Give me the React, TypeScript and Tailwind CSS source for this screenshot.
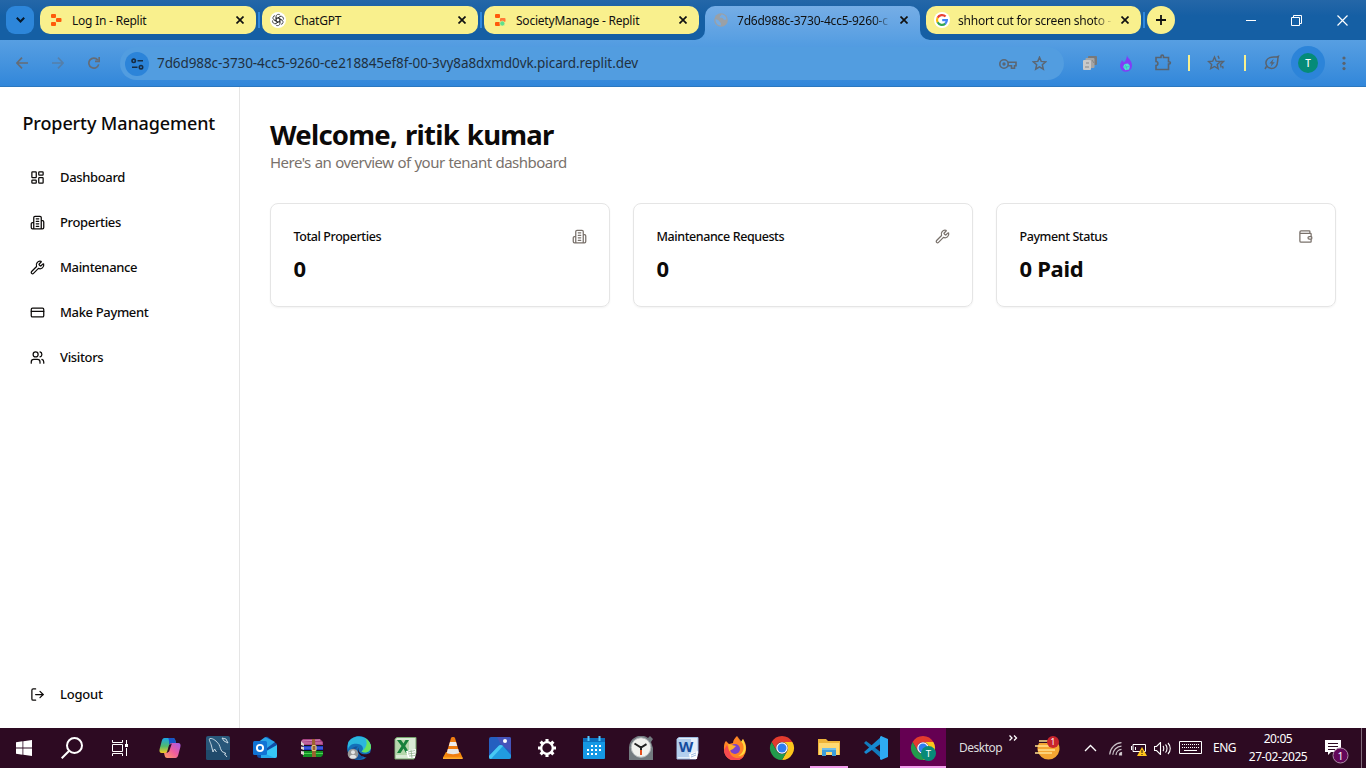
import React from "react";
import { LayoutDashboard, Wrench, CreditCard, Users, LogOut } from "lucide-react";

type P = { children?: React.ReactNode };

function ReplitIcon({ dot }: { dot?: boolean }) {
  return (
    <svg width="12" height="14" viewBox="0 0 12 14">
      <rect x="1" y="1" width="5" height="4" rx="1" fill="#ff5a0a" />
      <rect x="6" y="5" width="5.5" height="4" rx="1" fill={dot ? "#ff7a35" : "#ff5a0a"} />
      <rect x="1" y="9" width="5" height="4" rx="1" fill="#ff5a0a" />
      {dot && <circle cx="8.3" cy="10.5" r="2.5" fill="#5fe08c" stroke="#f9f08d" strokeWidth=".6" />}
    </svg>
  );
}

function OpenAIIcon() {
  return (
    <svg width="16" height="16" viewBox="0 0 16 16" fill="none">
      <circle cx="8" cy="8" r="8" fill="#fff" />
      <g stroke="#222" strokeWidth=".7">
        {[0, 60, 120, 180, 240, 300].map((a) => (
          <path key={a} d="M6.100 9.100V4.600a2.300 2.300 0 0 1 4.200-1.300M6.100 6.900 9.900 4.700" transform={`rotate(${a} 8 8)`} />
        ))}
      </g>
    </svg>
  );
}

function GlobeIcon() {
  return (
    <svg width="14" height="14" viewBox="0 0 14 14">
      <circle cx="7" cy="7" r="6.8" fill="#9aa0a6" />
      <path d="M1.500 6.200c2 .2 3.300.9 3.600 2 .3 1.100 1.700.8 1.800 2.100v2.200C3.800 12.300 1.400 9.900 1.500 6.200zM7.300 1.400c.2 1.500-1.500 1.300-1.600 2.500-.1 1 1.300.9 2.200.8 1.400 0 1 1.700 2.200 2 .9.2 1.600-.3 2.300-.2.1-2.900-2.200-5.100-5.100-5.100z" fill="#74ace5" />
    </svg>
  );
}

function GoogleG() {
  return (
    <svg width="16" height="16" viewBox="0 0 16 16" fill="none" strokeWidth="2.200">
      <circle cx="8" cy="8" r="8" fill="#fff" />
      <path d="M11.600 4.500A5 5 0 0 0 3.600 5.800" stroke="#ea4335" />
      <path d="M3.600 5.700a5 5 0 0 0 0 4.700" stroke="#fbbc05" />
      <path d="M3.600 10.300a5 5 0 0 0 7.700 1.400" stroke="#34a853" />
      <path d="M8.200 8.100h4.700a5 5 0 0 1-1.700 3.700" stroke="#4285f4" />
    </svg>
  );
}

function CloseX() {
  return (
    <svg width="8" height="8" viewBox="0 0 8 8" className="shrink-0" stroke="#111" strokeWidth="1.700">
      <path d="M.5.5l7 7M7.500.5l-7 7" />
    </svg>
  );
}

function Tab({ icon, children, active, wide, faded }: P & { icon: React.ReactNode; active?: boolean; wide?: boolean; faded?: boolean }) {
  const base = active
    ? "relative mr-1.5 flex h-[34px] shrink-0 items-start rounded-t-[10px] bg-linear-to-b from-[#75ade6] to-[#589fe2]"
    : "mr-1.5 flex h-7 shrink-0 items-start rounded-[10px] bg-[#f9f08d]";
  return (
    <div className={`${base} ${wide ? "w-[216px]" : "w-[215px]"}`}>
      {active && (
        <>
          <svg className="absolute bottom-0 -left-2.5" width="10" height="10">
            <path d="M10 0v10H0A10 10 0 0 0 10 0" fill="#589fe2" />
          </svg>
          <svg className="absolute -right-2.5 bottom-0" width="10" height="10">
            <path d="M0 0v10h10A10 10 0 0 1 0 0" fill="#589fe2" />
          </svg>
        </>
      )}
      <div className="ml-2 flex h-7 w-4 items-center justify-center">{icon}</div>
      <div className={`ml-2 flex h-7 flex-1 items-center pt-px text-[12px] tracking-[-0.22px] whitespace-nowrap text-[#111] ${faded ? "mask-r-from-88% mask-r-to-100%" : ""}`}>
        {children}
      </div>
      <div className="mr-3 ml-2 flex h-7 items-center">
        <CloseX />
      </div>
    </div>
  );
}

function TabDivider() {
  return <i className="mt-1.5 mr-0.5 -ml-1 h-4 w-0.5 bg-[#2e88de]" />;
}

function Browser() {
  return (
    <header className="h-[87px] font-['Noto_Sans',sans-serif]">
      <div className="flex h-10 items-start bg-linear-to-b from-[#2467a8] via-[#155fa4] via-40% to-[#155fa4] pt-1.5 pl-1.5">
        <div className="mr-1.5 flex size-7 items-center justify-center rounded-[9px] bg-[#2d86da]">
          <svg width="9" height="6" viewBox="0 0 9 6" fill="none" stroke="#07192b" strokeWidth="2"><path d="m.8.8 3.700 3.700L8.200.8" /></svg>
        </div>
        <Tab wide icon={<ReplitIcon />}>Log In - Replit</Tab>
        <TabDivider />
        <Tab wide icon={<OpenAIIcon />}>ChatGPT</Tab>
        <TabDivider />
        <Tab icon={<ReplitIcon dot />}>SocietyManage - Replit</Tab>
        <Tab active faded icon={<GlobeIcon />}>7d6d988c-3730-4cc5-9260-c</Tab>
        <Tab faded icon={<GoogleG />}>shhort cut for screen shoto -</Tab>
        <TabDivider />
        <div className="flex size-7 items-center justify-center rounded-full bg-[#f9f08d]">
          <svg width="10" height="10" stroke="#111" strokeWidth="1.800"><path d="M5 0v10M0 5h10" /></svg>
        </div>
        <div className="mr-px ml-auto flex h-7 items-center">
          <div className="flex w-[46px] justify-center pl-0.5"><svg width="10" height="10" stroke="#fff"><path d="M0 5.500h10" /></svg></div>
          <div className="flex w-[46px] justify-center"><svg width="11" height="11" fill="none" stroke="#fff"><path d="M2.500 2.500v-2h8v8h-2M.5 2.500h8v8h-8z" /></svg></div>
          <div className="flex w-[46px] justify-center"><svg width="11" height="11" stroke="#fff" strokeWidth="1.200"><path d="m.5.5 10 10M10.500.5l-10 10" /></svg></div>
        </div>
      </div>
      <div className="flex h-[47px] items-start border-b border-[#2c78bf] bg-linear-to-b from-[#579fe2] to-[#3187da] pt-[7px]">
        <div className="flex h-8 w-[120px] items-center pl-4 text-[#656c76]">
          <svg width="12" height="12" viewBox="0 0 12 12" fill="none" stroke="currentColor" strokeWidth="1.700"><path d="M12 6H1M6 .7.900 6 6 11.300" /></svg>
          <svg className="ml-6 opacity-50" width="12" height="12" viewBox="0 0 12 12" fill="none" stroke="currentColor" strokeWidth="1.700"><path d="M0 6h11M6 .7 11.100 6 6 11.300" /></svg>
          <svg className="ml-6" width="12" height="12" viewBox="0 0 12 12" fill="none" stroke="currentColor" strokeWidth="1.700"><path d="M10.700 7.400a5 5 0 1 1-.9-4.400M11.200 0v4.300H7" /></svg>
        </div>
        <div className="flex h-[33px] w-[944px] items-center rounded-[17px] bg-[#529de0] pr-[17px] pl-[5px]">
          <div className="flex size-6 items-center justify-center rounded-full bg-[#2c84d9]">
            <svg width="13" height="12" viewBox="0 0 13 12" fill="none" stroke="#172c43" strokeWidth="1.600"><circle cx="2.700" cy="2.800" r="1.700" /><path d="M6.500 2.800H12M1 9.200h5.500" /><circle cx="10" cy="9.200" r="1.700" /></svg>
          </div>
          <span className="ml-2 text-[13.500px] tracking-[-0.085px] text-[#20303f]">7d6d988c-3730-4cc5-9260-ce218845ef8f-00-3vy8a8dxmd0vk.picard.replit.dev</span>
          <div className="ml-auto flex items-center text-[#5b6673]">
            <svg width="18" height="12" viewBox="0 0 18 12" fill="none" stroke="currentColor" strokeWidth="1.600"><circle cx="5" cy="6" r="4.200" /><path d="M9 4.200h8v3.600h-1.500v2.400h-3V7.800H9" /><circle cx="5" cy="6" r="1.700" fill="currentColor" stroke="none" /></svg>
            <svg className="ml-[15px]" width="15" height="15" viewBox="0 0 15 15" fill="none" stroke="currentColor" strokeWidth="1.500"><path d="m7.500 1.300 1.700 4.100 4.500.4-3.400 2.900 1 4.400-3.800-2.300-3.800 2.300 1-4.400L1.300 5.800l4.500-.4z" /></svg>
          </div>
        </div>
        <div className="flex h-8 items-center pl-[18px] text-[#59636f]">
          <svg width="16" height="16" viewBox="0 0 16 16"><rect x="6" y="1" width="9" height="9" rx="1" fill="#77797b" /><rect x="3.500" y="3" width="9" height="10" rx="1" fill="#a5a5a5" /><rect x="1" y="5" width="8" height="10" rx="1" fill="#c9c9c9" /><path d="M3 12h4M4 8h3M10 5l2 3" stroke="#888" /></svg>
          <svg className="ml-5" width="16" height="17" viewBox="0 0 16 17"><path d="M9 0c0 3 5 5 5 10.500A6 6 0 0 1 2 11c0-3 1.500-4 2-6l2 2.500C7.500 6 9 3 9 0z" fill="#813df6" /><path d="m6.500 9 3.500-.4 2 2.400-1 3.500-3.500.7L5 12z" fill="#4ee1d5" /><path d="m6.500 9 2 3 3.500-1M5 12l3.500 0 .5 3" stroke="#35a7ba" strokeWidth=".5" fill="none" /></svg>
          <svg className="ml-5" width="18" height="18" viewBox="0 0 18 18" fill="none" stroke="currentColor" strokeWidth="1.600"><path d="M2 3.500h5V2.300c0-1.700 2.500-1.700 2.500 0v1.200h5v4.200h.7c1.600 0 1.600 2.300 0 2.300h-.7v5.500H2v-4c2.500 0 2.500-4 0-4z" /></svg>
          <i className="ml-4 h-4 w-0.5 bg-[#f9f08d]" />
          <svg className="ml-[17px]" width="18" height="16" viewBox="0 0 18 16" fill="none" stroke="currentColor" strokeWidth="1.400"><path d="m7.500 2 1.700 4.200 4.300.3L10.200 9.400l1 4.300-3.700-2.200-3.800 2.200 1-4.300L1.500 6.500l4.200-.3zM11 .8l1.200 3M14 6.500h2.500L13.500 9.500l.7 3M15.500 11l.7 2.500" /></svg>
          <i className="ml-[19px] h-4 w-0.5 bg-[#f9f08d]" />
          <svg className="ml-[18px]" width="16" height="16" viewBox="0 0 16 16" fill="none" stroke="currentColor" strokeWidth="1.500"><path d="M14.300 1.500c-2.600 1.200-6 .1-8.500 1.100C2.700 3.800 1 7 2.500 10.300c1.500 3.500 6.300 4.200 9.300 1.400 2.700-2.600 1.200-6.200 2.500-10.200zM2.500 11.500 1 14" /><path d="M9.600 3.800 5.400 8.400h2.300l-1.100 3.400 4.200-4.600H8.400z" fill="currentColor" stroke="none" /></svg>
        </div>
        <div className="ml-[11px] -mt-px flex size-[34px] items-center justify-center rounded-full bg-[#2c84d9]"><span className="flex size-5 items-center justify-center rounded-full bg-[#058b78] text-[10px] font-medium text-white">T</span></div>
        <svg className="mt-[9px] ml-[17px]" width="4" height="15" viewBox="0 0 4 15" fill="#59636f"><circle cx="2" cy="2" r="1.600" /><circle cx="2" cy="7.300" r="1.600" /><circle cx="2" cy="12.600" r="1.600" /></svg>
      </div>
    </header>
  );
}

function BuildingTall({ className }: { className?: string }) {
  return (
    <svg className={className} viewBox="0 0 24 24" fill="none" stroke="currentColor" strokeWidth="2" strokeLinecap="round" strokeLinejoin="round">
      <path d="M6 22V4a2 2 0 0 1 2-2h8a2 2 0 0 1 2 2v18ZM6 12H4a2 2 0 0 0-2 2v6a2 2 0 0 0 2 2h2M18 9h2a2 2 0 0 1 2 2v9a2 2 0 0 1-2 2h-2M10 6h4M10 10h4M10 14h4M10 18h4" />
    </svg>
  );
}

const nav = [
  { label: "Dashboard", Icon: LayoutDashboard },
  { label: "Properties", Icon: BuildingTall },
  { label: "Maintenance", Icon: Wrench },
  { label: "Make Payment", Icon: CreditCard },
  { label: "Visitors", Icon: Users },
];

function Card({ title, value, children }: P & { title: string; value: string }) {
  return (
    <section className="h-[104px] rounded-[8px] border border-[#e5e5e5] px-[22px] pt-[22px] shadow-xs">
      <div className="flex h-5 items-center justify-between">
        <h2 className="pt-0.5 pl-[0.5px] text-[12.500px] font-medium tracking-[-0.420px]">{title}</h2>
        <span className="text-[#79716b]">{children}</span>
      </div>
      <div className="mt-[7px] pl-[0.5px] text-[22px] leading-[30px] font-bold tracking-[-0.300px] word-spacing-[1px]">{value}</div>
    </section>
  );
}

function Page() {
  return (
    <div className="flex h-[641px] bg-white font-['Noto_Sans',sans-serif] text-[#0c0a09]">
      <aside className="flex w-60 flex-col border-r border-[#e5e5e5]">
        <h1 className="mt-[23px] ml-[22.500px] text-[18px] leading-[27px] font-medium tracking-[-0.120px] whitespace-nowrap">Property Management</h1>
        <nav className="mt-[18px]">
          {nav.map(({ label, Icon }) => (
            <a key={label} className="flex h-[45px] items-center pl-[30px] text-[13px] font-medium tracking-[-0.350px]">
              <Icon className="mr-[15px] size-[15px]" />
              {label}
            </a>
          ))}
        </nav>
        <a className="mt-auto mb-[11px] flex h-[45px] items-center pl-[30px] text-[13px] font-medium tracking-[-0.200px]">
          <LogOut className="mr-[15px] size-[15px]" />
          Logout
        </a>
      </aside>
      <main className="flex-1 px-[30px] pt-[30px]">
        <h1 className="text-[27.500px] leading-[35px] font-bold tracking-[-0.750px] [word-spacing:1.500px]">Welcome, ritik kumar</h1>
        <p className="-mt-px text-[15px] leading-[22px] tracking-[-0.520px] text-[#79716b] [word-spacing:0.500px]">Here's an overview of your tenant dashboard</p>
        <div className="mt-[30px] grid grid-cols-3 gap-[23px]">
          <Card title="Total Properties" value="0"><BuildingTall className="size-[15px]" /></Card>
          <Card title="Maintenance Requests" value="0"><Wrench className="size-[15px]" /></Card>
          <Card title="Payment Status" value="0 Paid">
            <svg className="size-[15px]" viewBox="0 0 24 24" fill="none" stroke="currentColor" strokeWidth="2" strokeLinecap="round" strokeLinejoin="round"><path d="M19 7V4a1 1 0 0 0-1-1H5a2 2 0 0 0 0 4h15a1 1 0 0 1 1 1v4h-3a2 2 0 0 0 0 4h3a1 1 0 0 0 1-1v-2a1 1 0 0 0-1-1M3 5v14a2 2 0 0 0 2 2h15a1 1 0 0 0 1-1v-4" /></svg>
          </Card>
        </div>
      </main>
    </div>
  );
}

function Slot({ children, open, current }: P & { open?: boolean; current?: boolean }) {
  return (
    <div className={current ? "ml-px flex h-10 w-[46px] flex-col items-center bg-[#650052]" : "flex h-10 w-[47px] flex-col items-center"}>
      <div className="flex h-[38px] items-center justify-center pt-0.5">{children}</div>
      {(open || current) && <div className={current ? "h-0.5 w-full bg-[#f29cec]" : "h-0.5 w-[38px] bg-[#f29cec]"} />}
    </div>
  );
}

function Chrome({ badge }: { badge?: boolean }) {
  return (
    <svg width="26" height="26" viewBox="0 0 26 26">
      <path d="M2.600 7A12 12 0 0 1 23.400 7H13a6 6 0 0 0-5.200 9z" fill="#e33b2e" />
      <path d="M23.400 7A12 12 0 0 1 13 25l5.200-9A6 6 0 0 0 13 7z" fill="#fcc61c" />
      <path d="M2.600 7A12 12 0 0 0 13 25l5.200-9A6 6 0 0 1 7.800 16z" fill="#229b4c" />
      <circle cx="13" cy="13" r="5.800" fill="#fff" />
      <circle cx="13" cy="13" r="4.500" fill="#2f7df0" />
      {badge && <><circle cx="18.500" cy="18.500" r="7.500" fill="#078a78" /><text x="18.500" y="22" fontSize="9.500" fill="#fff" textAnchor="middle" fontFamily="Noto Sans">T</text></>}
    </svg>
  );
}

function Taskbar() {
  return (
    <footer className="flex h-10 bg-[#2d0a22] font-['Noto_Sans',sans-serif] text-white">
      <div className="flex w-12 items-center justify-center"><svg width="16" height="16" viewBox="0 0 16 16" fill="#fff"><path d="M0 2.200 6.500 1.300v6.300H0zM7.300 1.200 16 0v7.600H7.300zM0 8.400h6.500v6.300L0 13.800zM7.300 8.400H16V16l-8.700-1.200z" /></svg></div>
      <div className="flex w-12 items-center justify-center"><svg width="22" height="22" viewBox="0 0 22 22" fill="none" stroke="#fff" strokeWidth="2"><circle cx="13.500" cy="8.500" r="7.500" /><path d="M8 14 .7 21.300" /></svg></div>
      <div className="mr-[3px] flex w-12 items-center justify-center"><svg width="17" height="16" viewBox="0 0 17 16" fill="none" stroke="#fff"><path d="M.5 0v2.500h10V0M.5 16v-2.500h10V16M.5 4.500h10v7H.5zM14.500 0v4M14.500 8v8" /><path d="M13 4h3v3h-3z" fill="#fff" stroke="none" /></svg></div>

      <Slot>
        <svg className="-ml-px" width="22" height="22" viewBox="0 0 24 22" preserveAspectRatio="none">
          <defs>
            <linearGradient id="cpa" x1="0" y1="0" x2="0" y2="1"><stop stopColor="#1aa7e8" /><stop offset=".55" stopColor="#52b96c" /><stop offset="1" stopColor="#f5cb25" /></linearGradient>
            <linearGradient id="cpb" x1="1" y1="0" x2="0" y2="1"><stop stopColor="#a45bea" /><stop offset=".5" stopColor="#ef5c9c" /><stop offset="1" stopColor="#ffa260" /></linearGradient>
          </defs>
          <path d="M6 1h9c2 0 2.500 1 3 3l.5 2h-4c-2 0-3 1-3.500 3l-1.500 5c-.5 1.500-1.500 2-3 2H3c-2 0-3-1.500-2.300-4L3 4c.6-2 1.500-3 3-3z" fill="url(#cpa)" />
          <path d="M10 1h5c2 0 2.500 1 3 3l.5 2h-4c-2 0-3 1-3.500 2C11 5 11 2 10 1z" fill="#1754c8" />
          <path d="M18 21H9c-2 0-2.500-1-3-3l-.5-2h1c2 0 3-1 3.500-3l1.500-5c.5-1.500 1.500-2 3-2H21c2 0 3 1.500 2.300 4L21 18c-.6 2-1.500 3-3 3z" fill="url(#cpb)" />
          <path d="m11 8 3-1.500-3 8L8.500 16z" fill="#2d0a22" />
        </svg>
      </Slot>
      <Slot>
        <svg width="24" height="24" viewBox="0 0 24 24" fill="none"><rect width="24" height="24" rx="2" fill="#28577a" /><path d="M0 14h24v8a2 2 0 0 1-2 2H2a2 2 0 0 1-2-2z" fill="#204a6b" /><path d="M7 16 5.500 10C5 7 2 3 4 2.500c3-.5 7 3 9 6 1.500 3 1.500 5 3 7l4 2-1.500.5 2.500 3M7 16l1.500-3 2 3M16 2l2 3 4 2-2-4z" stroke="#d9e5ed" strokeWidth=".9" /></svg>
      </Slot>
      <Slot>
        <svg width="24" height="24" viewBox="0 0 24 24"><path d="m4 8 9-7c.6-.4 1.200-.4 1.800 0L24 8v12a2 2 0 0 1-2 2H7a3 3 0 0 1-3-3z" fill="#0f4ea6" /><path d="m4 7 7.500-5.500c.6-.4 1.200-.4 1.800 0L22 6l-8 6H4z" fill="#29a4e8" /><path d="m24 9-16 9v2a2 2 0 0 0 2 2h12a2 2 0 0 0 2-2z" fill="#36c6f5" /><path d="m8 16 14 6H8z" fill="#26a9ea" /><rect y="5" width="14" height="14" rx="1.500" fill="#1173d4" /><circle cx="7" cy="12" r="3.100" stroke="#fff" strokeWidth="1.900" fill="none" /></svg>
      </Slot>
      <Slot>
        <svg width="24" height="20" viewBox="0 0 24 20"><path d="m1 3 2-2h17l3 3v3H3z" fill="#a84383" /><path d="m2 3 18-1M3 5h19" stroke="#e7a6cf" strokeWidth=".7" /><path d="M3 8h20v4H3z" fill="#1d39c8" /><path d="M3 13h20v4l-2 2H3z" fill="#129023" /><path d="M3 15.500h20" stroke="#5ae45d" strokeWidth=".8" /><path d="M3 10h20" stroke="#6f8cf2" strokeWidth=".8" /><path d="M2 7.500h21M2 12.500h21" stroke="#11131e" strokeWidth="1.200" /><path d="m1 3 3 3v2L1 7zM1 8.500 4 9v3l-3-1zM1 13l3 .5V17l-3-1z" fill="#ddd6d0" /><path d="M12 1h3l1 18h-4z" fill="#9b6330" /><rect x="12" y="7.500" width="4" height="5" rx="1" fill="none" stroke="#e5c978" strokeWidth="1.200" /></svg>
      </Slot>
      <Slot>
        <svg width="24" height="24" viewBox="0 0 24 24"><circle cx="12" cy="12" r="12" fill="#1470b8" /><path d="M1 7C5-2 21-2 24 10c.5 6-6 8-9.500 5.500 3-3 1-7-3.500-7.500C7 7.500 3 8 1 13z" fill="#2bb7dd" /><path d="M18 2c5 3 7 8 5.500 11-2 4-6 4-9 2.500C20 12 21 6 18 2z" fill="#69e35c" /><path d="M12 10.500c-2 2.500 0 7.500 5 7.800 2.500.2 4-.5 6-1.300l1 2-3 3-4-1C12 20 9 14 12 10.500z" fill="#2d0a22" /><path d="M11 10.500c-4 3-2 9 6 10-3 4-9 4-13 .5-2-8 2-11 7-10.500z" fill="#15529a" /><circle cx="6" cy="18" r="5.300" fill="#999" /><circle cx="6" cy="16.300" r="2" fill="#e5e5e5" /><path d="M2.500 21c1-3 6-3 7 0-2 2-5 2-7 0z" fill="#e5e5e5" /></svg>
      </Slot>
      <Slot>
        <svg width="23" height="23" viewBox="0 0 23 23"><path d="M1 2 3 .5h19v15.500L20 22H1z" fill="#d9ead5" stroke="#76a66d" /><path d="M2 3h13v15H2z" fill="#b5d7ab" /><path d="m3 3 4.500 6L3 16h3.500l3-4.500 2.500 4.500h3.500l-4.300-7L15 3h-3.500l-2 3.500L7 3z" fill="#16813b" /><path d="m12 14 10-2-1 9H14z" fill="#fff" /><path d="m14 15 7-1.500M14 17l7-1M15 19l6-.500M17 13l1 8" stroke="#8db08a" strokeWidth=".8" /></svg>
      </Slot>
      <Slot>
        <svg width="22" height="24" viewBox="0 0 22 24"><path d="M4 16h14l2.500 5.500V23H1v-1.500z" fill="#f58a0b" /><path d="M9 2c.5-1.200 3.500-1.200 4 0l5 17c-2 2-12 2-14 0z" fill="#ef7d12" /><path d="m8 6 6 0 1.200 4H6.800z" fill="#eee" /><path d="m5.800 13 10.400 0 1 4c-2 1.500-10.400 1.500-12.400 0z" fill="#e7e7e7" /><path d="M1 21.500h19.500V23H1z" fill="#ffad32" /></svg>
      </Slot>
      <Slot>
        <svg width="22" height="22" viewBox="0 0 22 22"><rect width="22" height="22" rx="2" fill="#245fc0" /><path d="M8 0h12a2 2 0 0 1 2 2v12L12 8z" fill="#4554ba" /><path d="m0 19 9.500-10c1.400-1.400 3-1.400 4.500 0l8 9v2a2 2 0 0 1-2 2H2a2 2 0 0 1-2-2z" fill="#219cdf" /><path d="m0 19 9.500-10c1.400-1.400 3-1.400 4.500 0L2 22a2 2 0 0 1-2-2z" fill="#48c8f3" /><circle cx="16" cy="4" r="2" fill="#fff" /></svg>
      </Slot>
      <Slot>
        <svg width="20" height="20" viewBox="0 0 20 20" fill="none" stroke="#fff"><circle cx="10" cy="10" r="5.800" strokeWidth="2.300" /><path d="M10 1v3M10 16v3M1 10h3M16 10h3M3.600 3.600l2.200 2.200M14.200 14.200l2.200 2.200M3.600 16.400l2.200-2.200M14.200 5.800l2.200-2.200" strokeWidth="3.100" /></svg>
      </Slot>
      <Slot>
        <svg width="22" height="24" viewBox="0 0 22 24"><rect y="2" width="22" height="21" rx="1" fill="#1598e5" /><path d="M0 3a1 1 0 0 1 1-1h20a1 1 0 0 1 1 1v3H0z" fill="#0c71be" /><path d="M5.500 0v5M16.500 0v5" stroke="#57caff" strokeWidth="2" /><path d="M8 10h11M4 14h15M4 18h11" stroke="#fff" strokeWidth="2" strokeDasharray="2 2" /></svg>
      </Slot>
      <Slot>
        <svg width="24" height="24" viewBox="0 0 24 24"><path d="M0 12A12 12 0 0 1 19 2l2-2 3 3-2 3 2 6v12H0z" fill="#737b80" /><circle cx="12" cy="11.500" r="9.800" fill="#f1f1ee" stroke="#b3b8ba" /><path d="m5.500 7.500 6.500 4 5.500-3.300" fill="none" stroke="#222" strokeWidth="2" /><path d="M12 10v4" stroke="#222" strokeWidth="2" /><path d="M12 14v5" stroke="#e64d1c" strokeWidth="2" /></svg>
      </Slot>
      <Slot>
        <svg width="23" height="23" viewBox="0 0 23 23"><path d="M1 2 3 .5h19V16l-2 6H1z" fill="#e4eef9" stroke="#9dbbe1" /><path d="M1 2h14v18H1z" fill="#b3cfee" /><text x="10" y="15" textAnchor="middle" fontSize="15" fontWeight="bold" fill="#164c9e" fontFamily="Noto Sans">W</text><path d="m13 17 9-3-1 8h-7z" fill="#fff" /><path d="m15 18 5-2M15 20l5-2" stroke="#9ebde2" /></svg>
      </Slot>
      <Slot>
        <svg width="24" height="24" viewBox="0 0 24 24"><path d="M3 5 6 8l4-1c0-3 2-5 4-7l4 6 2-3c2 3 3.500 6 3 10a11 11 0 0 1-22 1C.8 10 1 7 3 5z" fill="#ff8425" /><path d="m14 0 6 8c2 6-1 10-5 12 7 0 9-6 7-12l-2-5-2 3z" fill="#ffd93e" /><path d="M1 14a11 11 0 0 0 20 6c-4 3-12 3-14-3L4 9z" fill="#f5494f" /><circle cx="12" cy="13" r="5" fill="#7a42cb" /><path d="m5 8 4 1 4 1-3 3-4 2z" fill="#ffb12e" /></svg>
      </Slot>
      <Slot><Chrome /></Slot>
      <Slot open>
        <svg width="22" height="20" viewBox="0 0 22 20"><path d="M0 1h8l2 2h12v14H0z" fill="#eeb339" /><path d="M1 5h20v12H1z" fill="#ffd973" /><path d="M4 18v-8h14v8h-4v-4H8v4z" fill="#3e9edb" /><path d="M4 10h14v2H4z" fill="#71bde9" /></svg>
      </Slot>
      <Slot>
        <svg width="24" height="24" viewBox="0 0 24 24"><path d="m0 7 2-2L18 17v6z" fill="#127bbd" /><path d="m0 16 2 2L18 7V0z" fill="#1689d1" /><path d="m17 0 7 3v18l-7 3-1-1V1z" fill="#2eaaf2" /></svg>
      </Slot>
      <Slot current><Chrome badge /></Slot>

      <div className="flex w-[420px]">
        <span className="ml-[13px] w-[50px] pt-[11px] text-[12px] leading-[18px] tracking-[-0.500px] whitespace-nowrap text-[#ddd]">Desktop</span>
        <svg className="mt-[7px]" width="9" height="6" viewBox="0 0 9 6" fill="none" stroke="#fff" strokeWidth="1.300"><path d="m.5.5 2.500 2.500L.5 5.500M5 .5 7.500 3 5 5.500" /></svg>
        <svg className="mt-[7px] ml-[17px]" width="26" height="26" viewBox="0 0 26 26"><path d="M4 8a11 11 0 1 0 19 0z" fill="#f4a532" /><path d="M4 6h14M0 11h20M3 15h17M0 18h17" stroke="#ffe18f" strokeWidth="1.700" /><circle cx="18" cy="7" r="6" fill="#c9242c" /><text x="18" y="10" textAnchor="middle" fontSize="8.500" fill="#fff" fontFamily="Noto Sans">1</text></svg>
        <svg className="mt-[16px] ml-[23px]" width="13" height="8" fill="none" stroke="#fff" strokeWidth="1.300"><path d="m1 7 5.500-5.500L12 7" /></svg>
        <svg className="mt-[14px] ml-3" width="14" height="14" viewBox="0 0 14 14" fill="none" stroke="#c9c1c7" strokeWidth="1.200"><path d="M.7 12.500A12.500 12.500 0 0 1 12.500.7M3.800 12.800a9 9 0 0 1 8.700-8.700M7 13a6 6 0 0 1 5.500-5.700" /><path d="M10.500 13a2.300 2.300 0 0 1 2-2.500V13z" fill="#fff" /></svg>
        <svg className="mt-[14px] ml-2" width="16" height="16" viewBox="0 0 16 16" fill="none" stroke="#fff"><path d="M2 2.500h12.500v7H2zM.5 4v4M4.500 5v3" /><path d="m11 5 5 9H6z" fill="#ffc51c" stroke="none" /><path d="M11 8v3M11 12v1" stroke="#241611" /></svg>
        <svg className="mt-[14px] ml-[7px]" width="17" height="13" viewBox="0 0 17 13" fill="none" stroke="#fff" strokeWidth="1.100"><path d="M.5 4.500h2l4-4v12l-4-4h-2zM9 4c1 1 1 4 0 5M11.500 2.500c2 2 2 6 0 8M14 1c3 3 3 8 0 11" /></svg>
        <svg className="mt-[13px] ml-[8px]" width="23" height="13" viewBox="0 0 23 13" fill="none" stroke="#fff"><path d="M.5.5h22v12H.5zM5 9.500h13" /><path d="M3 3.500h17M3 6.500h17" strokeDasharray="1 1" /></svg>
        <span className="ml-[11px] w-[23px] pt-[11px] text-[12px] leading-[18px] tracking-[-0.500px]">ENG</span>
        <div className="ml-2.5 w-[64px] pt-0.5 text-center text-[12px] leading-[18px] tracking-[-0.400px] whitespace-nowrap"><div>20:05</div><div>27-02-2025</div></div>
        <svg className="mt-[11px] ml-[15px]" width="26" height="26" viewBox="0 0 26 26"><path d="M0 1h16v12H6l-3 3v-3H0z" fill="#fff" /><path d="M3 4.500h10M3 7.500h10M3 10.500h7" stroke="#2d0a22" /><circle cx="15.500" cy="16.500" r="7.500" fill="#630759" stroke="#aa8aa5" /><text x="15.500" y="20.500" textAnchor="middle" fontSize="10.500" fill="#fff" fontFamily="Noto Sans">1</text></svg>
        <i className="ml-auto mr-[4px] h-10 w-px bg-[#806b7a]" />
      </div>
    </footer>
  );
}

export default function App() {
  return (
    <div className="h-[768px] w-[1366px] overflow-hidden">
      <Browser />
      <Page />
      <Taskbar />
    </div>
  );
}
